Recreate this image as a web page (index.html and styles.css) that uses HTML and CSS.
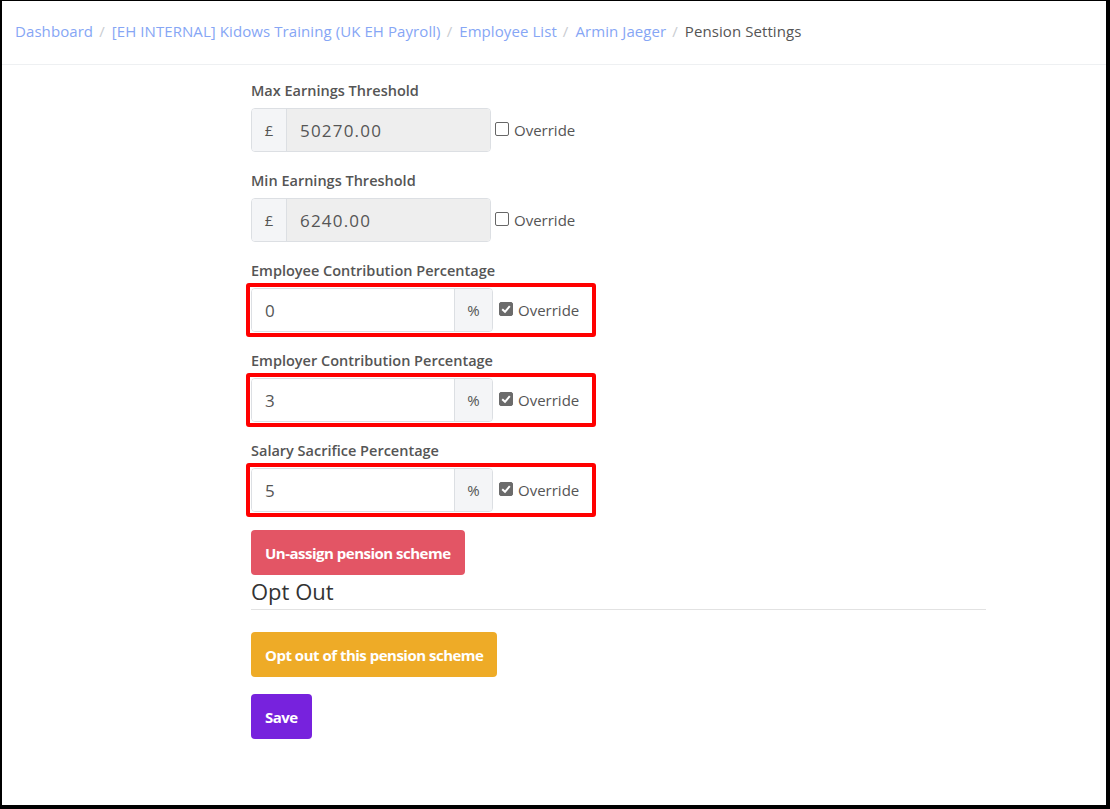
FILE: index.html
```html
<!DOCTYPE html>
<html>
<head>
<meta charset="utf-8">
<link rel="stylesheet" href="styles.css">
</head>
<body>
<div class="frame">
  <nav class="breadcrumb">
    <a class="crumb">Dashboard</a><span class="sep">/</span>
    <a class="crumb">[EH INTERNAL] Kidows Training (UK EH Payroll)</a><span class="sep">/</span>
    <a class="crumb">Employee List</a><span class="sep">/</span>
    <a class="crumb">Armin Jaeger</a><span class="sep">/</span>
    <span class="current">Pension Settings</span>
  </nav>
  <main class="content">
    <div class="group">
      <label class="label">Max Earnings Threshold</label>
      <div class="row">
        <div class="input-group">
          <span class="addon addon-left">£</span>
          <span class="input disabled">50270.00</span>
        </div>
        <label class="check"><span class="box"></span>Override</label>
      </div>
    </div>
    <div class="group">
      <label class="label">Min Earnings Threshold</label>
      <div class="row">
        <div class="input-group">
          <span class="addon addon-left">£</span>
          <span class="input disabled">6240.00</span>
        </div>
        <label class="check"><span class="box"></span>Override</label>
      </div>
    </div>
    <div class="group">
      <label class="label">Employee Contribution Percentage</label>
      <div class="row highlight">
        <div class="input-group">
          <span class="input">0</span>
          <span class="addon addon-right">%</span>
        </div>
        <label class="check checked"><span class="box"><svg viewBox="0 0 14 14" width="14" height="14"><path d="M3.2 7.2 L6 9.8 L10.8 4.2" fill="none" stroke="#fff" stroke-width="2"/></svg></span>Override</label>
      </div>
    </div>
    <div class="group">
      <label class="label">Employer Contribution Percentage</label>
      <div class="row highlight">
        <div class="input-group">
          <span class="input">3</span>
          <span class="addon addon-right">%</span>
        </div>
        <label class="check checked"><span class="box"><svg viewBox="0 0 14 14" width="14" height="14"><path d="M3.2 7.2 L6 9.8 L10.8 4.2" fill="none" stroke="#fff" stroke-width="2"/></svg></span>Override</label>
      </div>
    </div>
    <div class="group">
      <label class="label">Salary Sacrifice Percentage</label>
      <div class="row highlight">
        <div class="input-group">
          <span class="input">5</span>
          <span class="addon addon-right">%</span>
        </div>
        <label class="check checked"><span class="box"><svg viewBox="0 0 14 14" width="14" height="14"><path d="M3.2 7.2 L6 9.8 L10.8 4.2" fill="none" stroke="#fff" stroke-width="2"/></svg></span>Override</label>
      </div>
    </div>
    <button class="btn btn-danger">Un-assign pension scheme</button>
    <h3 class="section-title">Opt Out</h3>
    <button class="btn btn-warning">Opt out of this pension scheme</button>
    <button class="btn btn-primary">Save</button>
  </main>
</div>
</body>
</html>
```
FILE: styles.css
```css
* { box-sizing: border-box; }
html, body { margin: 0; padding: 0; background: #fff; }
body {
  font-family: "Open Sans", "Liberation Sans", sans-serif;
  color: #555;
}
.frame {
  width: 1110px;
  height: 809px;
  border-style: solid;
  border-color: #000;
  border-width: 1px 4px 4px 2px;
  overflow: hidden;
}
.breadcrumb {
  height: 64px;
  display: flex;
  align-items: center;
  padding: 0 0 4px 13px;
  border-bottom: 1px solid #eef0f2;
  font-size: 15px;
  letter-spacing: 0.08px;
}
.crumb { color: #86a6f5; }
.sep { color: #c9ccd1; padding: 0 7px 0 6px; }
.current { color: #555; }
.content {
  padding: 16px 0 0 249px;
  width: 986px;
  display: flex;
  flex-direction: column;
  align-items: flex-start;
}
.group { margin-bottom: 19px; }
.label {
  display: block;
  font-size: 14.5px;
  font-weight: 600;
  color: #555;
  line-height: 20px;
  margin-bottom: 7px;
}
.row {
  display: flex;
  align-items: center;
}
.highlight {
  margin: -5px;
  padding: 1px 13px 1px 1px;
  border: 4px solid #f00;
  border-radius: 3px;
}
.input-group {
  display: flex;
  height: 44px;
  width: 240px;
  border: 1px solid #dcdfe3;
  border-radius: 4px;
  overflow: hidden;
}
.highlight .input-group { width: 242px; }
.addon {
  display: flex;
  align-items: center;
  justify-content: center;
  background: #f4f5f7;
  font-size: 15px;
  color: #555;
}
.addon-left { width: 35px; border-right: 1px solid #dcdfe3; }
.addon-right { width: 38px; border-left: 1px solid #dcdfe3; }
.input {
  flex: 1;
  display: flex;
  align-items: center;
  padding-left: 13px;
  font-size: 17px;
  letter-spacing: 1.2px;
  color: #555;
  background: #fff;
}
.input.disabled { background: #eeeeee; }
.check {
  display: flex;
  align-items: center;
  font-size: 15px;
  color: #555;
  margin-left: 4px;
  margin-top: 0;
}
.check .box {
  width: 14px;
  height: 14px;
  border: 1px solid #666;
  border-radius: 2px;
  background: #fff;
  margin-right: 5px;
  margin-top: -3px;
  display: flex;
}
.check.checked { margin-left: 6px; }
.check.checked .box {
  background: #6b6b6b;
  border-color: #6b6b6b;
  margin-right: 5px;
}
.check.checked .box svg { margin: -1px; }
.btn {
  border: none;
  border-radius: 4px;
  height: 45px;
  padding: 0 14px;
  color: #fff;
  font-family: "Open Sans", "Liberation Sans", sans-serif;
  font-size: 15px;
  font-weight: 700;
  letter-spacing: -0.5px;
}
.btn-danger { background: #e35565; margin-top: -1px; }
.btn-warning { background: #eeab27; margin-top: 22px; }
.btn-primary { background: #7722dd; margin-top: 17px; }
.section-title {
  margin: 2px 0 0;
  width: 735px;
  font-size: 22px;
  font-weight: 400;
  color: #333;
  line-height: 28px;
  padding-bottom: 4px;
  border-bottom: 1px solid #e2e2e2;
}
```
